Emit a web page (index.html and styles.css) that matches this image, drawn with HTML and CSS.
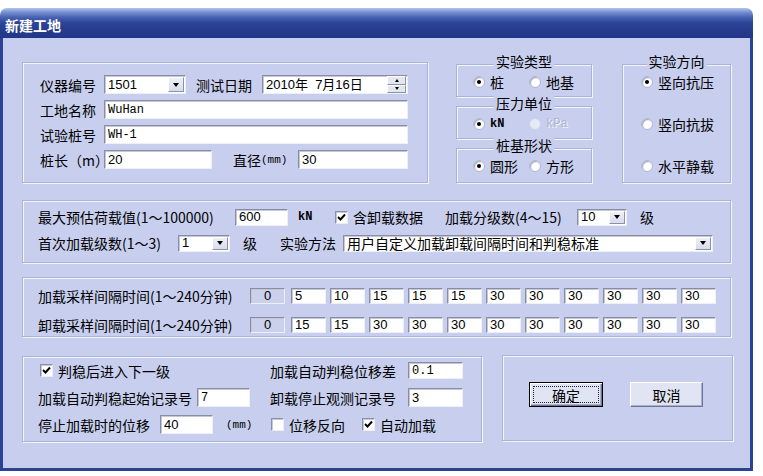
FILE: index.html
```html
<!DOCTYPE html>
<html lang="zh-CN">
<head>
<meta charset="utf-8">
<title>新建工地</title>
<link rel="stylesheet" href="styles.css">
</head>
<body>
<div class="window">
  <div class="titlebar"><span class="title">新建工地</span></div>
  <div class="client">
    <div class="row-a">
      <div class="group g1">
        <div class="frow">
          <span class="lb w64">仪器编号</span>
          <div class="field combo w82"><span class="val num">1501</span><span class="dd"><i class="tri"></i></span></div>
          <span class="lb w56 ml10">测试日期</span>
          <div class="field date w146 ml10"><span class="val num">2010年&nbsp;&nbsp;7月16日</span><span class="spin"><span class="sb"><i class="tri-up"></i></span><span class="sb"><i class="tri-dn"></i></span></span></div>
        </div>
        <div class="frow">
          <span class="lb w64">工地名称</span>
          <div class="field w304"><span class="mono">WuHan</span></div>
        </div>
        <div class="frow">
          <span class="lb w64">试验桩号</span>
          <div class="field w304"><span class="mono">WH-1</span></div>
        </div>
        <div class="frow">
          <span class="lb w64">桩长（m）</span>
          <div class="field w108"><span class="num">20</span></div>
          <span class="lb w65 ml21">直径<span class="small">(mm)</span></span>
          <div class="field w110"><span class="num">30</span></div>
        </div>
      </div>

      <div class="stack">
        <div class="group sg h33">
          <div class="gtitle"><span>实验类型</span></div>
          <div class="rrow">
            <span class="ritem w56"><span class="radio on"></span><span>桩</span></span>
            <span class="ritem"><span class="radio"></span><span>地基</span></span>
          </div>
        </div>
        <div class="group sg h33">
          <div class="gtitle"><span>压力单位</span></div>
          <div class="rrow">
            <span class="ritem w56"><span class="radio on"></span><span class="unit">kN</span></span>
            <span class="ritem disabled"><span class="radio dis"></span><span class="unit">kPa</span></span>
          </div>
        </div>
        <div class="group sg h35">
          <div class="gtitle"><span>桩基形状</span></div>
          <div class="rrow">
            <span class="ritem w56"><span class="radio on"></span><span>圆形</span></span>
            <span class="ritem"><span class="radio"></span><span>方形</span></span>
          </div>
        </div>
      </div>

      <div class="group dir">
        <div class="gtitle"><span>实验方向</span></div>
        <div class="rrow"><span class="ritem"><span class="radio on"></span><span>竖向抗压</span></span></div>
        <div class="rrow gap28"><span class="ritem"><span class="radio"></span><span>竖向抗拔</span></span></div>
        <div class="rrow gap28"><span class="ritem"><span class="radio"></span><span>水平静载</span></span></div>
      </div>
    </div>

    <div class="group g2">
      <div class="frow h18">
        <span class="lb w197">最大预估荷载值(1～100000)</span>
        <div class="field w53 h17"><span class="num">600</span></div>
        <span class="lb w37 ml10"><span class="unit">kN</span></span>
        <span class="lb w110"><span class="cb on"><svg width="9" height="9" viewBox="0 0 9 9"><path d="M1 4 L3.5 6.5 L8 1.5" fill="none" stroke="#000" stroke-width="1.9"/></svg></span><span class="cbl">含卸载数据</span></span>
        <span class="lb w132">加载分级数(4～15)</span>
        <div class="field combo w50 h17"><span class="val num">10</span><span class="dd"><i class="tri"></i></span></div>
        <span class="lb ml13">级</span>
      </div>
      <div class="frow h18 mt8">
        <span class="lb w140">首次加载级数(1～3)</span>
        <div class="field combo w52 h17"><span class="val num">1</span><span class="dd"><i class="tri"></i></span></div>
        <span class="lb w37 ml13">级</span>
        <span class="lb w63">实验方法</span>
        <div class="field combo w370 h17"><span class="val">用户自定义加载卸载间隔时间和判稳标准</span><span class="dd"><i class="tri"></i></span></div>
      </div>
    </div>

    <div class="group g3">
      <div class="crow">
        <span class="lb w212">加载采样间隔时间(1～240分钟)</span>
        <span class="cell dis">0</span>
        <span class="cells">
          <span class="cell">5</span><span class="cell">10</span><span class="cell">15</span><span class="cell">15</span><span class="cell">15</span><span class="cell">30</span><span class="cell">30</span><span class="cell">30</span><span class="cell">30</span><span class="cell">30</span><span class="cell">30</span>
        </span>
      </div>
      <div class="crow mt13">
        <span class="lb w212">卸载采样间隔时间(1～240分钟)</span>
        <span class="cell dis">0</span>
        <span class="cells">
          <span class="cell">15</span><span class="cell">15</span><span class="cell">30</span><span class="cell">30</span><span class="cell">30</span><span class="cell">30</span><span class="cell">30</span><span class="cell">30</span><span class="cell">30</span><span class="cell">30</span><span class="cell">30</span>
        </span>
      </div>
    </div>

    <div class="row-d">
      <div class="group g4">
        <div class="g4grid">
          <div class="gcell pl2"><span class="cb on"><svg width="9" height="9" viewBox="0 0 9 9"><path d="M1 4 L3.5 6.5 L8 1.5" fill="none" stroke="#000" stroke-width="1.9"/></svg></span><span class="cbl">判稳后进入下一级</span></div>
          <div class="gcell"><span class="lb w138">加载自动判稳位移差</span><div class="field w55 h17"><span class="mono">0.1</span></div></div>
          <div class="gcell"><span class="lb w159">加载自动判稳起始记录号</span><div class="field w53"><span class="mono">7</span></div></div>
          <div class="gcell"><span class="lb w138">卸载停止观测记录号</span><div class="field w55"><span class="num">3</span></div></div>
          <div class="gcell"><span class="lb w122">停止加载时的位移</span><div class="field w53"><span class="num">40</span></div><span class="small ml13">(mm)</span></div>
          <div class="gcell pl1"><span class="lb w91"><span class="cb"></span><span class="cbl">位移反向</span></span><span class="cb on"><svg width="9" height="9" viewBox="0 0 9 9"><path d="M1 4 L3.5 6.5 L8 1.5" fill="none" stroke="#000" stroke-width="1.9"/></svg></span><span class="cbl">自动加载</span></div>
        </div>
      </div>
      <div class="group g5">
        <div class="btns">
          <span class="btn default"><span class="focus">确定</span></span>
          <span class="btn w73">取消</span>
        </div>
      </div>
    </div>
  </div>
</div>
</body>
</html>
```

FILE: styles.css
```css
* { box-sizing: border-box; }
html, body { margin: 0; padding: 0; background: #ffffff; }
body {
  font-family: "Noto Sans CJK SC", "Noto Sans", sans-serif;
  font-size: 14px;
  line-height: 14px;
  color: #000;
}
i { font-style: normal; }

.window { width: 753px; margin-top: 8px; }

.titlebar {
  height: 30px;
  border-radius: 7px 7px 0 0;
  background: linear-gradient(to bottom, #b3c3ec 0%, #7e97d6 12%, #4a64b4 30%, #2c4396 50%, #243a8c 80%, #223688 100%);
  display: flex;
  align-items: center;
  padding: 4px 0 0 5px;
}
.title { color: #fff; font-weight: 700; font-size: 14px; }

.client {
  height: 433px;
  background: #c8cfee;
  border: 3px solid #2a4493;
  border-top: none;
  padding: 24px 19px 0 19px;
}

.group {
  border: 1px solid #aab2d7;
  box-shadow: inset 1px 1px 0 #f4f6fe, 1px 1px 0 #f4f6fe;
  flex: none;
}

.row-a { display: flex; align-items: flex-start; }
.g1 { width: 406px; height: 121px; padding: 12px 0 0 17px; }
.stack { margin-left: 28px; margin-top: 2px; width: 136px; display: flex; flex-direction: column; gap: 9px; }
.sg { width: 136px; padding-left: 16px; }
.h33 { height: 33px; }
.h35 { height: 35px; }
.dir { margin-left: 30px; margin-top: 2px; width: 109px; height: 119px; padding-left: 18px; }

.gtitle { height: 14px; margin-top: -11px; text-align: center; }
.sg .gtitle { margin-left: -16px; }
.dir .gtitle { margin-left: -18px; }
.gtitle span { background: #c8cfee; padding: 0 2px; display: inline-block; height: 14px; }

.rrow { display: flex; align-items: center; height: 14px; margin-top: 7px; }
.rrow.gap28 { margin-top: 28px; }
.ritem { display: flex; align-items: center; gap: 5px; flex: none; }

.radio {
  width: 12px; height: 12px; border-radius: 50%;
  background: radial-gradient(circle at 60% 60%, #ffffff 45%, #e2e4ee 100%);
  border: 1px solid #b3b9cf;
  box-shadow: inset 1px 1px 1px #a2a8bd;
  display: flex; align-items: center; justify-content: center;
  flex: none;
}
.radio.on::after { content: ""; width: 4px; height: 4px; border-radius: 50%; background: #000; }
.radio.dis { background: #e6e9f6; border-color: #cdd2e6; box-shadow: none; }
.disabled .unit { color: #aeb4cc; text-shadow: 1px 1px 0 #f4f6ff; font-weight: 400; }

.unit { font-family: "Liberation Mono", monospace; font-size: 12px; font-weight: 700; }
.small { font-family: "Liberation Mono", monospace; font-size: 11px; }

.frow { display: flex; align-items: center; height: 19px; margin-bottom: 6px; }
.frow.h18 { height: 18px; margin-bottom: 0; }
.lb { display: inline-flex; align-items: center; flex: none; white-space: nowrap; }

.field {
  background: #fff;
  height: 19px;
  border: 1px solid;
  border-color: #878da3 #eef0f8 #eef0f8 #878da3;
  box-shadow: inset 1px 1px 0 #c3c7d6;
  display: flex; align-items: center;
  padding-left: 3px;
  flex: none;
  overflow: hidden;
}
.field.h17 { height: 17px; }
.field .val { flex: 1; white-space: nowrap; }
.num { font-family: "Liberation Sans", "Noto Sans CJK SC", sans-serif; font-size: 13px; }
.mono { font-family: "Liberation Mono", monospace; font-size: 12px; }

.combo { padding-right: 1px; }
.dd {
  width: 16px; height: calc(100% - 2px);
  background: linear-gradient(#eef0f7, #d9dcea);
  border: 1px solid; border-color: #fff #8b91a8 #8b91a8 #fff;
  display: flex; align-items: center; justify-content: center; flex: none;
}
.tri { width: 0; height: 0; border-left: 3.5px solid transparent; border-right: 3.5px solid transparent; border-top: 4px solid #000; }
.spin { width: 19px; height: 17px; display: flex; flex-direction: column; flex: none; margin-right: 0; }
.sb {
  flex: 1; background: #e4e6f0;
  border: 1px solid; border-color: #fff #8b91a8 #8b91a8 #fff;
  display: flex; align-items: center; justify-content: center;
}
.tri-up { width: 0; height: 0; border-left: 2.5px solid transparent; border-right: 2.5px solid transparent; border-bottom: 3px solid #000; }
.tri-dn { width: 0; height: 0; border-left: 2.5px solid transparent; border-right: 2.5px solid transparent; border-top: 3px solid #000; }

.cb {
  width: 13px; height: 13px; background: #fff;
  border: 1px solid; border-color: #8a90a6 #eceef7 #eceef7 #8a90a6;
  box-shadow: inset 1px 1px 0 #c6cad8;
  display: inline-flex; align-items: center; justify-content: center; flex: none;
}
.cbl { margin-left: 5px; white-space: nowrap; }

.g2 { width: 709px; height: 63px; margin-top: 17px; padding: 7px 0 0 15px; }
.mt8 { margin-top: 8px; }

.g3 { width: 709px; height: 60px; margin-top: 14px; padding: 10px 0 0 15px; }
.crow { display: flex; align-items: center; height: 16px; }
.mt13 { margin-top: 13px; }
.cells { display: flex; gap: 4px; margin-left: 6px; }
.cell {
  width: 35px; height: 16px; background: #fff;
  border: 1px solid; border-color: #878da3 #eef0f8 #eef0f8 #878da3;
  box-shadow: inset 1px 1px 0 #c3c7d6;
  font-family: "Liberation Sans", sans-serif; font-size: 13px;
  display: flex; align-items: center; padding-left: 3px; flex: none;
}
.cell.dis { background: #cbd1ec; justify-content: center; padding-left: 0; }

.row-d { display: flex; align-items: flex-start; margin-top: 18px; }
.g4 { width: 460px; height: 86px; margin-top: 1px; padding: 4px 0 0 15px; }
.g4grid { display: grid; grid-template-columns: 232px 200px; grid-auto-rows: 19px; row-gap: 8px; }
.gcell { display: flex; align-items: center; }
.pl2 { padding-left: 2px; }
.pl1 { padding-left: 1px; }
.g5 { margin-left: 20px; width: 231px; height: 86px; padding: 26px 0 0 26px; }
.btns { display: flex; gap: 27px; }
.btn {
  width: 74px; height: 25px;
  background: #e1e4f2;
  border: 1px solid; border-color: #ffffff #6f7694 #6f7694 #ffffff;
  box-shadow: inset -1px -1px 0 #aab0cc;
  display: flex; align-items: center; justify-content: center;
}
.btn.w73 { width: 73px; }
.btn.default {
  border: 1px solid #000;
  box-shadow: inset 1px 1px 0 #fff, inset -1px -1px 0 #6f7694, inset -2px -2px 0 #aab0cc;
  padding: 3px;
}
.focus {
  flex: 1; align-self: stretch;
  border: 1px dotted #222;
  display: flex; align-items: center; justify-content: center;
}

/* widths */
.w37 { width: 37px; }
.w50 { width: 50px; }
.w52 { width: 52px; }
.w53 { width: 53px; }
.w55 { width: 55px; }
.w56 { width: 56px; }
.w63 { width: 63px; }
.w64 { width: 64px; }
.w65 { width: 65px; }
.w82 { width: 82px; }
.w91 { width: 91px; }
.w108 { width: 108px; }
.w110 { width: 110px; }
.w122 { width: 122px; }
.w132 { width: 132px; }
.w138 { width: 138px; }
.w140 { width: 140px; }
.w146 { width: 146px; }
.w159 { width: 159px; }
.w197 { width: 197px; }
.w212 { width: 212px; }
.w304 { width: 304px; }
.w370 { width: 370px; }
.ml10 { margin-left: 10px; }
.ml13 { margin-left: 13px; }
.ml21 { margin-left: 21px; }
.date { padding-right: 1px; }
```
